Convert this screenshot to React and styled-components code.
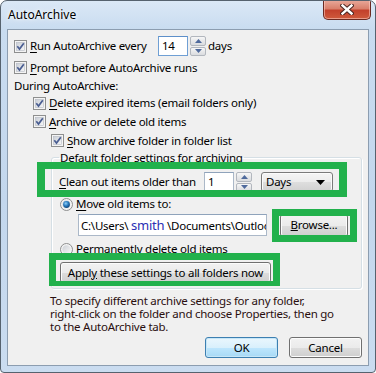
import styled, { createGlobalStyle } from 'styled-components'

const GlobalStyle = createGlobalStyle`
  html, body { margin: 0; padding: 0; background: #ffffff; }
  body {
    font-family: "Noto Sans", "Open Sans", "DejaVu Sans", sans-serif;
    font-size: 11.5px;
    letter-spacing: -0.25px;
    color: #000;
  }
  * { box-sizing: border-box; }
`

function CheckMark() {
  return (
    <svg width="13" height="13" viewBox="0 0 13 13">
      <defs>
        <linearGradient id="cbg" x1="0" y1="0" x2="1" y2="1">
          <stop offset="0" stopColor="#c9ced6" />
          <stop offset="1" stopColor="#f7f7f7" />
        </linearGradient>
      </defs>
      <rect x="0.5" y="0.5" width="12" height="12" fill="#f4f4f4" stroke="#8e8f8f" />
      <rect x="2.5" y="2.5" width="8" height="8" fill="url(#cbg)" stroke="#b4bac4" strokeWidth="0.6" />
      <path d="M3.3 6.3 L5.5 9 L9.8 3.3" fill="none" stroke="#4a5e92" strokeWidth="1.7" />
    </svg>
  )
}

function RadioMark({ checked }) {
  return (
    <svg width="13" height="13" viewBox="0 0 13 13">
      <defs>
        <radialGradient id="rdot" cx="0.4" cy="0.35" r="0.7">
          <stop offset="0" stopColor="#8fd0f8" />
          <stop offset="0.5" stopColor="#2a7cc0" />
          <stop offset="1" stopColor="#0d3f72" />
        </radialGradient>
        <linearGradient id="rbg" x1="0" y1="0" x2="1" y2="1">
          <stop offset="0" stopColor="#cdd1d6" />
          <stop offset="1" stopColor="#f6f6f6" />
        </linearGradient>
      </defs>
      <circle cx="6.5" cy="6.5" r="6" fill="#f3f3f3" stroke="#8e8f8f" />
      <circle cx="6.5" cy="6.5" r="4.2" fill="url(#rbg)" />
      {checked && <circle cx="6.5" cy="6.5" r="3.4" fill="url(#rdot)" />}
    </svg>
  )
}

function Arrow({ up }) {
  return (
    <svg width="7" height="4" viewBox="0 0 7 4">
      <path d={up ? 'M0 4 L3.5 0 L7 4 Z' : 'M0 0 L7 0 L3.5 4 Z'} fill="#4f6a9c" />
    </svg>
  )
}

function Spinner() {
  return (
    <Spin>
      <SpinBtn><Arrow up /></SpinBtn>
      <SpinBtn><Arrow /></SpinBtn>
    </Spin>
  )
}

export default function App() {
  return (
    <>
      <GlobalStyle />
      <Window>
        <TitleBar>
          <Title>AutoArchive</Title>
          <CloseButton>
            <svg width="14" height="11" viewBox="0 0 14 11">
              <path d="M2.5 1.5 L11.5 9.5 M11.5 1.5 L2.5 9.5" stroke="#4a2420" strokeWidth="4.4" strokeLinecap="square" />
              <path d="M2.5 1.5 L11.5 9.5 M11.5 1.5 L2.5 9.5" stroke="#ffffff" strokeWidth="2.4" strokeLinecap="square" />
            </svg>
          </CloseButton>
        </TitleBar>

        <Client>
          <Row $h={20} $mt={6}>
            <Check $w={144}><CheckMark /><Label><u>R</u>un AutoArchive every</Label></Check>
            <TextBox $w={30} $h={20} $focus>14</TextBox>
            <Spinner />
            <Label $ml={2}>days</Label>
          </Row>
          <Row $h={19} $mt={2}>
            <Check><CheckMark /><Label><u>P</u>rompt before AutoArchive runs</Label></Check>
          </Row>
          <Row $h={17}>
            <Label>During AutoArchive:</Label>
          </Row>
          <Row $h={18} $indent={19}>
            <Check><CheckMark /><Label><u>D</u>elete expired items (email folders only)</Label></Check>
          </Row>
          <Row $h={19} $indent={19}>
            <Check><CheckMark /><Label><u>A</u>rchive or delete old items</Label></Check>
          </Row>
          <Row $h={19} $indent={37}>
            <Check><CheckMark /><Label><u>S</u>how archive folder in folder list</Label></Check>
          </Row>

          <Group>
            <Legend>Default folder settings for archiving</Legend>
            <Row $h={20} $mt={6}>
              <Label $ml={-1} $w={144}><u>C</u>lean out items older than</Label>
              <TextBox $w={30} $h={20}>1</TextBox>
              <Spinner />
              <Combo><span>Days</span><svg width="9" height="5" viewBox="0 0 9 5"><path d="M0 0 L9 0 L4.5 5 Z" fill="#000" /></svg></Combo>
            </Row>
            <Row $h={18} $mt={3}>
              <Check><RadioMark checked /><Label><u>M</u>ove old items to:</Label></Check>
            </Row>
            <Row $h={24} $indent={18}>
              <PathBox>
                {'C:\\Users\\ '}<Smith>smith</Smith>{' \\Documents\\Outlook Files\\archive.pst'}
              </PathBox>
              <PushButton $w={68} $h={23} $ml={13}><span><u>B</u>rowse...</span></PushButton>
            </Row>
            <Row $h={18} $mt={3}>
              <Check><RadioMark /><Label>Permanently delete old items</Label></Check>
            </Row>
            <Row $h={21} $mt={4}>
              <PushButton $w={211} $h={21}><span>Appl<u>y</u> these settings to all folders now</span></PushButton>
            </Row>
          </Group>

          <Note>
            To specify different archive settings for any folder,<br />
            right-click on the folder and choose Properties, then go<br />
            to the AutoArchive tab.
          </Note>

          <Footer>
            <PushButton $w={73} $h={21} $default><span>OK</span></PushButton>
            <PushButton $w={73} $h={21}><span>Cancel</span></PushButton>
          </Footer>
        </Client>

        <Highlight style={{ left: 36, top: 161, width: 310, height: 35 }} $bw="7px 8px" />
        <Highlight style={{ left: 271, top: 208, width: 85, height: 33 }} $bw="7px" />
        <Highlight style={{ left: 48, top: 252, width: 231, height: 33 }} $bw="7px 7px 5px" />
      </Window>
    </>
  )
}

//----- styled-components -----

const Window = styled.div`
  position: relative;
  width: 376px;
  height: 373px;
  border: 1px solid #56626e;
  border-radius: 7px 7px 4px 4px;
  background: linear-gradient(180deg, #dbe8f6 0px, #c9dcf0 28px, #c3d7ed 200px, #cadcf0 100%);
  display: flex;
  flex-direction: column;
  overflow: hidden;
`
const TitleBar = styled.div`
  height: 28px;
  display: flex;
  justify-content: space-between;
  align-items: flex-start;
  padding-left: 7px;
`
const Title = styled.div`
  margin-top: 6px;
  line-height: 16px;
  font-size: 12px;
  letter-spacing: 0;
  color: #000;
  text-shadow: 0 0 6px #ffffff, 0 0 3px #ffffff;
`
const CloseButton = styled.div`
  width: 48px;
  height: 20px;
  margin: -1px 4px 0 0;
  border: 1px solid #6b2a22;
  border-top: none;
  border-radius: 0 0 5px 5px;
  background: linear-gradient(180deg, #e9aa9c 0%, #d9806c 45%, #c3412c 55%, #cf5a3c 100%);
  box-shadow: inset 0 0 0 1px rgba(255, 210, 200, 0.55);
  display: flex;
  align-items: center;
  justify-content: center;
`
const Client = styled.div`
  flex: 1;
  margin: 0 6px 6px 6px;
  border: 1px solid #8c9db0;
  background: #f0f0f0;
  padding: 0 6px 0 6px;
  display: flex;
  flex-direction: column;
`
const Row = styled.div`
  display: flex;
  align-items: center;
  height: ${p => p.$h}px;
  margin-top: ${p => p.$mt || 0}px;
  padding-left: ${p => p.$indent || 0}px;
  flex-shrink: 0;
`
const Check = styled.div`
  display: flex;
  align-items: center;
  gap: 3px;
  width: ${p => (p.$w ? `${p.$w}px` : 'auto')};
  svg { flex-shrink: 0; }
`
const Label = styled.span`
  white-space: nowrap;
  line-height: 16px;
  margin-left: ${p => p.$ml || 0}px;
  width: ${p => (p.$w ? `${p.$w + 1}px` : 'auto')};
  u { text-underline-offset: 2px; }
`
const TextBox = styled.div`
  width: ${p => p.$w}px;
  height: ${p => p.$h}px;
  background: #ffffff;
  border: 1px solid ${p => (p.$focus ? '#6f9fd4' : '#abb8c8')};
  border-top-color: ${p => (p.$focus ? '#5d8fc9' : '#8fa3bb')};
  padding: 1px 3px;
  line-height: 16px;
`
const Spin = styled.div`
  display: flex;
  flex-direction: column;
  gap: 1px;
  height: 20px;
  margin-left: 2px;
`
const SpinBtn = styled.div`
  flex: 1;
  width: 16px;
  border: 1px solid #b2b7be;
  border-radius: 2px;
  background: linear-gradient(180deg, #f7f7f7 0%, #e7e8ea 50%, #dadcdf 100%);
  display: flex;
  align-items: center;
  justify-content: center;
`
const Combo = styled.div`
  width: 72px;
  height: 20px;
  margin-left: 9px;
  border: 1px solid #7a7a7a;
  border-radius: 3px;
  background: linear-gradient(180deg, #f4f4f4 0%, #ececec 50%, #dedede 51%, #d1d1d1 100%);
  box-shadow: inset 0 0 0 1px #fbfbfb;
  display: flex;
  align-items: center;
  justify-content: space-between;
  padding: 0 7px 0 4px;
  line-height: 16px;
`
const Group = styled.fieldset`
  margin: -1px 0 0 37px;
  padding: 0 0 5px 8px;
  border: 1px solid #d5dfe5;
  border-radius: 3px;
  box-shadow: inset 1px 1px 0 #ffffff, 1px 1px 0 #ffffff;
  min-width: 0;
`
const Legend = styled.legend`
  padding: 0 1px;
  margin-left: -1px;
  line-height: 17px;
`
const PathBox = styled.div`
  width: 189px;
  height: 22px;
  background: #ffffff;
  border: 1px solid #abb8c8;
  border-top-color: #8fa3bb;
  padding: 2px 2px;
  line-height: 16px;
  white-space: nowrap;
  overflow: hidden;
`
const Smith = styled.span`
  color: #2b2fb4;
  font-size: 13px;
`
const PushButton = styled.div`
  width: ${p => p.$w}px;
  height: ${p => p.$h}px;
  margin-left: ${p => p.$ml || 0}px;
  border: 1px solid ${p => (p.$default ? '#3c7fb1' : '#707070')};
  border-radius: 3px;
  background: ${p => (p.$default
    ? 'linear-gradient(180deg, #eaf6fd 0%, #d9f0fc 50%, #bee6fd 51%, #a7d9f5 100%)'
    : 'linear-gradient(180deg, #f2f2f2 0%, #ebebeb 50%, #dddddd 51%, #cfcfcf 100%)')};
  box-shadow: inset 0 0 0 1px ${p => (p.$default ? '#c6e6f7' : '#fcfcfc')};
  display: flex;
  align-items: center;
  justify-content: center;
  line-height: 16px;
  white-space: nowrap;
  flex-shrink: 0;
`
const Note = styled.p`
  margin: 5px 0 0 36px;
  line-height: 13px;
  color: #2a0f0f;
`
const Footer = styled.div`
  display: flex;
  justify-content: flex-end;
  gap: 11px;
  margin-top: 4px;
`
const Highlight = styled.div`
  position: absolute;
  border: solid #22b14c;
  border-width: ${p => p.$bw};
  pointer-events: none;
`
